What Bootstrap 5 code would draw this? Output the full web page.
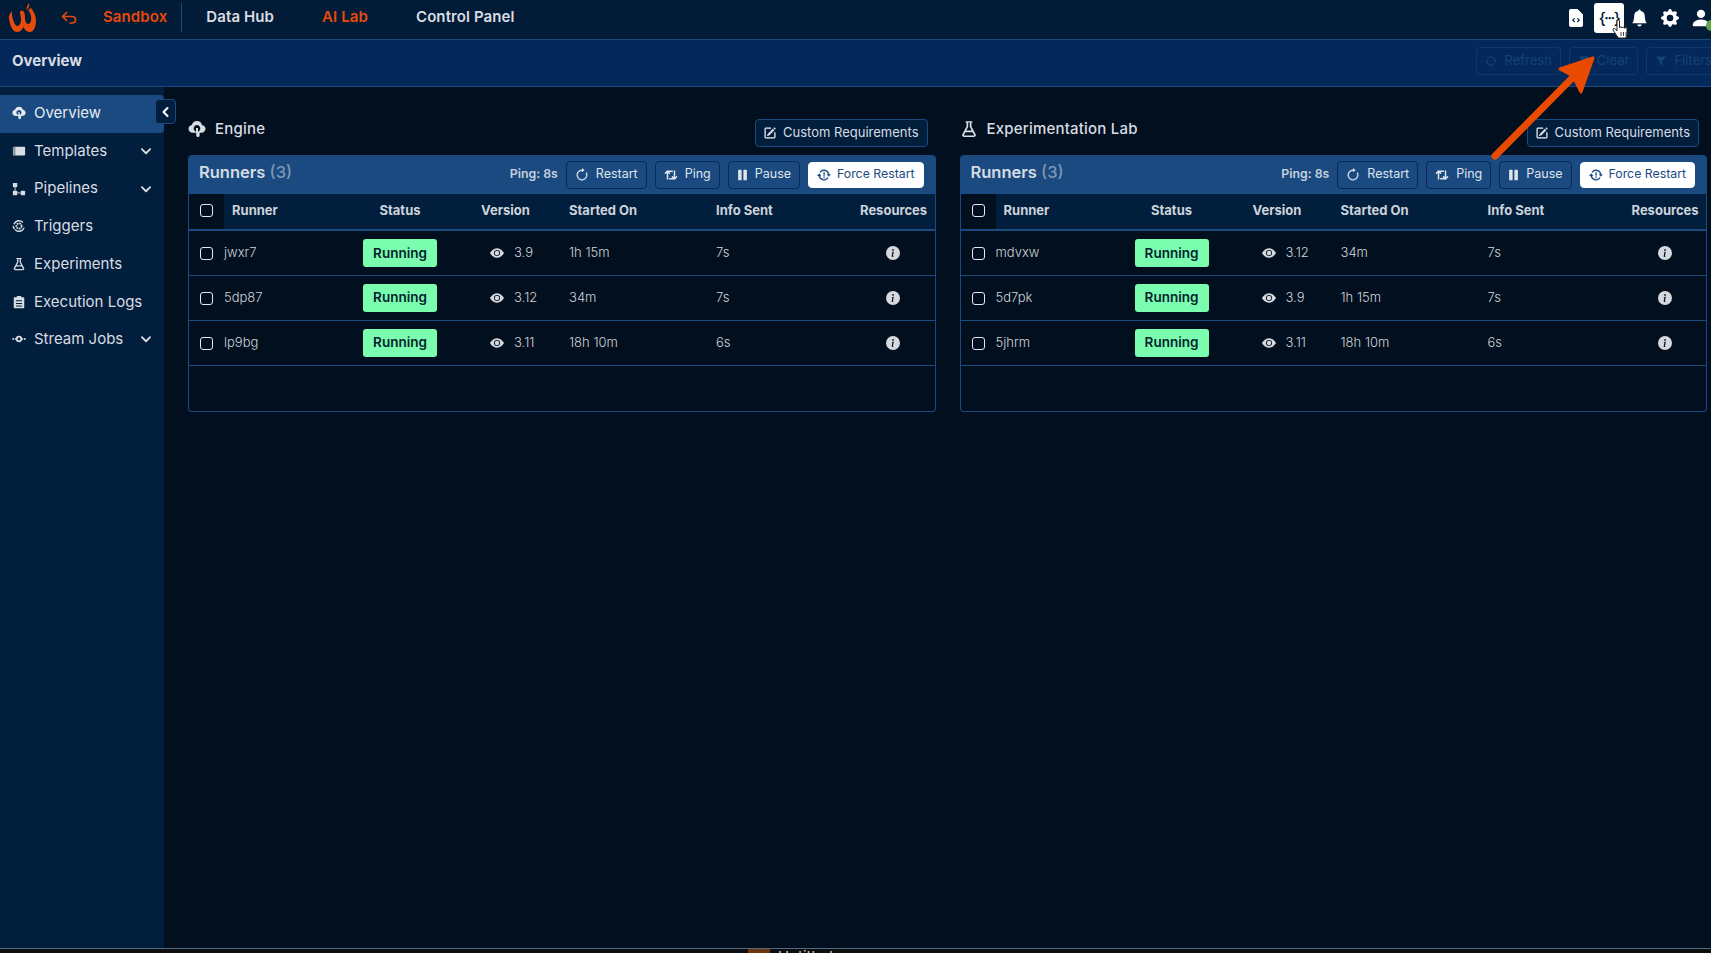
<!doctype html>
<html lang="en">
<head>
<meta charset="utf-8">
<title>Overview</title>
<link href="https://cdn.jsdelivr.net/npm/bootstrap@5.3.0/dist/css/bootstrap.min.css" rel="stylesheet">
<style>
:root{--ink:#021e3d;--deep:#020f1e;--blue:#1a4a80;--orange:#e84a0c;--txt:#d9dde2}
html,body{height:100%}
body{background:var(--deep);color:var(--txt);font-family:Inter,"Noto Sans",sans-serif;font-size:13px;overflow:hidden;height:953px}
.ic{width:14px;height:14px;fill:currentColor;flex:none}
.st{fill:none;stroke:currentColor;stroke-width:1.7;stroke-linecap:round;stroke-linejoin:round}
.topbar{height:40px;background:#021b36;border-bottom:1px solid var(--blue);padding:0 0 4px 0}
.logo{width:30px;height:32px;margin-left:8px;flex:none}
.backarrow{width:16px;height:16px;color:var(--orange);margin-left:23px;flex:none}
.toplink{font-size:15px;font-weight:600;letter-spacing:.1px;color:var(--txt);text-decoration:none;white-space:nowrap}
.toplink.hot{color:var(--orange)}
.gap-sandbox{margin-left:26px}
.gap-hub{margin-left:48px}
.vsep{width:1px;height:29px;background:var(--blue);margin:0 24px 0 14px}
.topicons{margin-left:auto;gap:0;padding-right:0}
.topicons .ic{color:#fff}
.filei{height:18px}
.codebox{width:30px;height:30px;background:#fff;border-radius:3px;color:#021b36;font-size:16px;font-weight:500;letter-spacing:-1.6px;margin:0 7px 0 11px}
.belli{width:17px;height:18px}
.geari{width:18px;height:18px;margin-left:13px}
.useri{width:22px;height:24px;margin-left:-2px}
.userwrap{width:19px;height:24px;margin-left:13px;margin-right:0;position:relative}
.okdot{position:absolute;right:-6px;bottom:-1px;width:11px;height:11px;border-radius:50%;background:#5aa84a}
.subbar{height:47px;background:#04285a;border-bottom:1px solid var(--blue);padding:0 0 4px 12px;overflow:visible}
.subtitle{font-size:15px;font-weight:700;color:var(--txt)}
.dimbtn,.dimbtn:disabled{--bs-btn-padding-y:0;--bs-btn-padding-x:8px;height:28px;font-size:13px;color:#134476;border:1px solid #0c3a70;border-radius:4px;background:transparent;display:flex;align-items:center;gap:7px;white-space:nowrap;opacity:1}
.dimbtn .ic{width:12px;height:12px}
.dimset{gap:8px;margin-right:-10px}
.shell{height:861px}
.sidebar{width:164px;flex:none;background:var(--ink);padding-top:8px;position:relative}
.sideitem{height:37.7px;display:flex;align-items:center;padding:0 12px 1px;color:var(--txt);font-size:15px;font-weight:400;gap:8px;border-radius:0 4px 4px 0;white-space:nowrap}
.sideitem:hover{color:var(--txt)}
.sideitem.on{background:var(--blue);color:#e6ebf0}
.sideitem .chev{margin-left:auto;width:12px;height:12px}
.collapser{position:absolute;left:155px;top:12px;width:21px;height:25px;background:var(--ink);border:1px solid var(--blue);border-radius:4px;color:#fff;padding:0;display:flex;align-items:center;justify-content:center;z-index:2}
.content{flex:1;min-width:0;padding:32px 4px 0 24px;display:grid;grid-template-columns:1fr 1fr;gap:24px;align-items:start}
.panelhead{height:36px}
.panelname{font-size:15px;font-weight:500;letter-spacing:.2px;line-height:20px;gap:9px;color:var(--txt)}
.panelname .ic{width:18px;height:18px}
.darkbtn{--bs-btn-padding-y:0;--bs-btn-padding-x:8px;height:28px;background:var(--ink);border:1px solid var(--blue);border-radius:4px;color:var(--txt);font-size:13px;font-weight:400;display:flex;align-items:center;gap:7px;margin-right:8px}
.darkbtn .ic{width:12px;height:12px}
.darkbtn:hover{color:var(--txt);background:var(--ink);border-color:var(--blue)}
.runbox{border:1px solid var(--blue);border-top:0;border-radius:4px;height:257px;overflow:hidden}
.runhead{height:39px;background:var(--blue);padding:0 12px 0 11px;margin:0 -1px;border-radius:4px 4px 0 0}
.runtitle{font-size:16.5px;font-weight:600;color:#d5dce4;margin-bottom:4px}
.runtitle span{color:#7f97b5;font-weight:500}
.pingtxt{font-size:12.3px;font-weight:600;color:#c6d1dd;margin-right:8px;white-space:nowrap}
.actbtn{--bs-btn-padding-y:0;--bs-btn-padding-x:8px;height:28px;background:transparent;border:1px solid #062a55;border-radius:4px;color:#dfe5ec;font-size:12.5px;display:flex;align-items:center;gap:7px;white-space:nowrap;margin-right:8px}
.actbtn:hover{color:#dfe5ec;border-color:#062a55}
.actbtn.solid{background:#fff;color:var(--blue);border-color:#fff;height:26px;margin-right:0;gap:6px;font-size:12.3px}
.actbtn.solid:hover{background:#fff;color:var(--blue);border-color:#fff}
.pausei{width:11px}
.runtable{--bs-table-bg:transparent;--bs-table-color:var(--txt);table-layout:fixed;margin:0;font-size:13px;width:100%}
.runtable th{height:36px;background:var(--ink);font-size:13px;font-weight:700;padding:0 8px 2px;vertical-align:middle;color:#ccd3da;border-bottom:2px solid var(--blue)}
.runtable th.boxcell{background:var(--deep)}
.runtable td{height:45px;padding:0 8px;vertical-align:middle;font-weight:300;border-bottom:1px solid var(--blue);color:#cfd4d9;box-shadow:none}
.runtable td.namecell{padding-left:0}
.boxcell{width:35px;padding:0 0 0 11px!important}
.w-name{width:103px}.w-stat{width:146px}.w-ver{width:88px}.w-start{width:147px}.w-info{width:144px}
.runtable .form-check-input{width:13px;height:13px;margin:4px 0 0 0;background-color:transparent;border:1px solid #e6e9ec;border-radius:3px;vertical-align:top}
.runtable th .form-check-input{margin-top:2px}
.pill{background:#7bfdb0;color:#04222e;font-size:13.5px;font-weight:600;width:74px;height:28px;border-radius:3px;display:inline-flex;align-items:center;justify-content:center}
.vereye{margin-left:9px;gap:10px}
.vereye .ic{width:14px;height:14px;color:#d5d9de}
.infoi{width:14px;height:14px;color:#d5d9de;fill:currentColor}
.footstrip{height:5px;background:#0c0e10;border-top:1px solid #55677a;overflow:hidden}
.footchip{width:22px;height:6px;background:#6b3510;margin-left:748px;flex:none}
.foottext{font-size:15px;line-height:15px;color:#c9c9c9;margin-left:8px;white-space:nowrap}
.overlay{position:absolute;left:0;top:0;width:1711px;height:953px;pointer-events:none;z-index:10}
</style>
</head>
<body>
<svg width="0" height="0" class="position-absolute">
<defs>
<symbol id="i-eye" viewBox="0 0 16 16"><path d="M10.5 8a2.5 2.5 0 1 1-5 0 2.5 2.5 0 0 1 5 0z"/><path d="M0 8s3-5.5 8-5.5S16 8 16 8s-3 5.5-8 5.5S0 8 0 8zm8 3.5a3.5 3.5 0 1 0 0-7 3.5 3.5 0 0 0 0 7z"/></symbol>
<symbol id="i-info" viewBox="0 0 16 16"><path d="M8 16A8 8 0 1 0 8 0a8 8 0 0 0 0 16zm.93-9.412-1 4.705c-.07.34.029.533.304.533.194 0 .487-.07.686-.246l-.088.416c-.287.346-.92.598-1.465.598-.703 0-1.002-.422-.808-1.319l.738-3.468c.064-.293.006-.399-.287-.47l-.451-.081.082-.381 2.29-.287zM8 5.5a1 1 0 1 1 0-2 1 1 0 0 1 0 2z"/></symbol>
<symbol id="i-bell" viewBox="0 0 16 16"><path d="M8 16a2 2 0 0 0 2-2H6a2 2 0 0 0 2 2zm.995-14.901a1 1 0 1 0-1.99 0A5.002 5.002 0 0 0 3 6c0 1.098-.5 6-2 7h14c-1.5-1-2-5.902-2-7 0-2.42-1.72-4.44-4.005-4.901z"/></symbol>
<symbol id="i-gear" viewBox="0 0 16 16"><path d="M9.405 1.05c-.413-1.4-2.397-1.4-2.81 0l-.1.34a1.464 1.464 0 0 1-2.105.872l-.31-.17c-1.283-.698-2.686.705-1.987 1.987l.169.311c.446.82.023 1.841-.872 2.105l-.34.1c-1.4.413-1.4 2.397 0 2.81l.34.1a1.464 1.464 0 0 1 .872 2.105l-.17.31c-.698 1.283.705 2.686 1.987 1.987l.311-.169a1.464 1.464 0 0 1 2.105.872l.1.34c.413 1.4 2.397 1.4 2.81 0l.1-.34a1.464 1.464 0 0 1 2.105-.872l.31.17c1.283.698 2.686-.705 1.987-1.987l-.169-.311a1.464 1.464 0 0 1 .872-2.105l.34-.1c1.4-.413 1.4-2.397 0-2.81l-.34-.1a1.464 1.464 0 0 1-.872-2.105l.17-.31c.698-1.283-.705-2.686-1.987-1.987l-.311.169a1.464 1.464 0 0 1-2.105-.872l-.1-.34zM8 10.93a2.929 2.929 0 1 1 0-5.86 2.929 2.929 0 0 1 0 5.858z"/></symbol>
<symbol id="i-user" viewBox="0 0 16 16"><path d="M3 14s-1 0-1-1 1-4 6-4 6 3 6 4-1 1-1 1H3zm5-6a3 3 0 1 0 0-6 3 3 0 0 0 0 6z"/></symbol>
<symbol id="i-edit" viewBox="0 0 16 16"><path d="M15.502 1.94a.5.5 0 0 1 0 .706L14.459 3.69l-2-2L13.502.646a.5.5 0 0 1 .707 0l1.293 1.293zm-1.75 2.456-2-2L4.939 9.21a.5.5 0 0 0-.121.196l-.805 2.414a.25.25 0 0 0 .316.316l2.414-.805a.5.5 0 0 0 .196-.12l6.813-6.814z"/><path d="M1 13.5A1.5 1.5 0 0 0 2.5 15h11a1.5 1.5 0 0 0 1.5-1.5v-6a.5.5 0 0 0-1 0v6a.5.5 0 0 1-.5.5h-11a.5.5 0 0 1-.5-.5v-11a.5.5 0 0 1 .5-.5H9a.5.5 0 0 0 0-1H2.5A1.5 1.5 0 0 0 1 2.5v11z" stroke="currentColor" stroke-width=".8"/></symbol>
<symbol id="i-restart" viewBox="0 0 16 16"><path d="M8 3a5 5 0 1 0 4.546 2.914.5.5 0 0 1 .908-.417A6 6 0 1 1 8 2v1z" stroke="currentColor" stroke-width=".5"/><path d="M8 4.466V.534a.25.25 0 0 1 .41-.192l2.36 1.966c.12.1.12.284 0 .384L8.41 4.658A.25.25 0 0 1 8 4.466z"/></symbol>
<symbol id="i-ping" viewBox="0 0 16 16"><path class="st" d="M4 12.5V3.6h5.5M1.6 6 4 3.4 6.4 6M12 3.5v8.9H6.5M9.6 10l2.4 2.6 2.4-2.6"/></symbol>
<symbol id="i-pause" viewBox="0 0 11 16"><rect x="0.5" y="2" width="4" height="12" rx="1"/><rect x="6.5" y="2" width="4" height="12" rx="1"/></symbol>
<symbol id="i-sync" viewBox="0 0 16 16"><path d="M11.534 7h3.932a.25.25 0 0 1 .192.41l-1.966 2.36a.25.25 0 0 1-.384 0l-1.966-2.36a.25.25 0 0 1 .192-.41zm-11 2h3.932a.25.25 0 0 0 .192-.41L2.692 6.23a.25.25 0 0 0-.384 0L.342 8.59A.25.25 0 0 0 .534 9z"/><path d="M8 3c-1.552 0-2.94.707-3.857 1.818a.5.5 0 1 1-.771-.636A6.002 6.002 0 0 1 13.917 7H12.9A5.002 5.002 0 0 0 8 3zM3.1 9a5.002 5.002 0 0 0 8.757 2.182.5.5 0 1 1 .771.636A6.002 6.002 0 0 1 2.083 9H3.1z" stroke="currentColor" stroke-width=".7"/></symbol>
<symbol id="i-forcesync" viewBox="0 0 16 16"><path d="M11.534 7h3.932a.25.25 0 0 1 .192.41l-1.966 2.36a.25.25 0 0 1-.384 0l-1.966-2.36a.25.25 0 0 1 .192-.41zm-11 2h3.932a.25.25 0 0 0 .192-.41L2.692 6.23a.25.25 0 0 0-.384 0L.342 8.59A.25.25 0 0 0 .534 9z"/><path d="M8 3c-1.552 0-2.94.707-3.857 1.818a.5.5 0 1 1-.771-.636A6.002 6.002 0 0 1 13.917 7H12.9A5.002 5.002 0 0 0 8 3zM3.1 9a5.002 5.002 0 0 0 8.757 2.182.5.5 0 1 1 .771.636A6.002 6.002 0 0 1 2.083 9H3.1z" stroke="currentColor" stroke-width=".7"/><rect x="7.3" y="5" width="1.6" height="3.8"/><rect x="7.3" y="9.6" width="1.6" height="1.5"/></symbol>
<symbol id="i-filter" viewBox="0 0 16 16"><path d="M1 2h14l-5.3 6.4V14l-3.4-1.8V8.4z"/></symbol>
<symbol id="i-engine" viewBox="0 0 18 18"><path fill-rule="evenodd" d="M9 1c2.5 0 4.4 1.6 4.9 3.9 2 .2 3.6 1.8 3.6 3.9 0 2.2-1.8 4-4 4h-1.9v2.4c0 .9-.7 1.8-1.6 1.8s-1.8-.9-1.8-1.8v-2.4H4.6c-2.3 0-4.1-1.8-4.1-4 0-2 1.4-3.6 3.4-3.9C4.5 2.6 6.5 1 9 1zM9 5a3.4 3.4 0 0 0-2.3 5.9c.6.5 1 .6 1.3.6V8h2v3.5c.4-.1.8-.3 1.2-.6A3.4 3.4 0 0 0 9 5z"/></symbol>
<symbol id="i-flask" viewBox="0 0 16 16"><path fill-rule="evenodd" d="M5 1h6v1.3h-.8v3.4l3.7 7c.6 1.1-.1 2.3-1.4 2.3H3.5c-1.3 0-2-1.2-1.4-2.3l3.7-7V2.3H5zm2.3 1.3v3.8L5.6 9.3h4.8L8.7 6.1V2.3zM4.8 10.8l-1.3 2.5c-.1.2 0 .4.2.4h8.6c.2 0 .3-.2.2-.4l-1.3-2.5z"/></symbol>
<symbol id="i-tpl" viewBox="0 0 16 16"><rect x="1" y="3" width="14" height="10" rx="1"/><rect x="1" y="3" width="3" height="10" fill="#021e3d" opacity=".35"/></symbol>
<symbol id="i-pipe" viewBox="0 0 16 16"><rect x="1" y="1" width="5" height="5" rx=".8"/><rect x="1" y="10" width="5" height="5" rx=".8"/><rect x="10" y="10" width="5" height="5" rx=".8"/><rect x="3" y="6" width="1" height="4"/><rect x="6" y="12" width="4" height="1"/></symbol>
<symbol id="i-trig" viewBox="0 0 16 16"><circle cx="8" cy="8" r="3" fill="none" stroke="currentColor" stroke-width="2" stroke-dasharray="2 .8"/><path class="st" stroke-width="1" d="M2.5 5.5A6 6 0 0 1 12 3.5M13.5 10.5A6 6 0 0 1 4 12.5M1.5 8.5A6.5 6.5 0 0 0 2.5 11"/></symbol>
<symbol id="i-log" viewBox="0 0 16 16"><path fill-rule="evenodd" d="M5.5 1h5v1.5H13c.6 0 1 .4 1 1V14c0 .6-.4 1-1 1H3c-.6 0-1-.4-1-1V3.5c0-.6.4-1 1-1h2.5zM4.500 6v1.200h7V6zm0 3v1.200h7V9zm0 3v1.200h7V12z"/></symbol>
<symbol id="i-stream" viewBox="0 0 16 16"><circle cx="8" cy="8" r="2.6" fill="none" stroke="currentColor" stroke-width="2"/><rect x="0.5" y="7" width="2" height="2"/><rect x="3.5" y="7" width="1.5" height="2"/><rect x="13.5" y="7" width="2" height="2"/><rect x="11" y="7" width="1.5" height="2"/></symbol>
<symbol id="i-chev" viewBox="0 0 16 16"><path fill="none" stroke="currentColor" stroke-width="2.4" stroke-linecap="round" stroke-linejoin="round" d="M2.5 5.5 8 11l5.5-5.500"/></symbol>
</defs>
</svg>

<nav class="navbar topbar flex-nowrap justify-content-start align-items-center">
  <svg class="logo" viewBox="0 0 30 32" aria-hidden="true"><path fill="#e84a0c" d="M21 1c1 3-1 5-1.5 8 1.5-1 2.500-2 3-3.500 3.500 4 5.500 8.500 5.500 13.500 0 6-2.500 11-6 11-3.500 0-5.500-2.500-6.500-5-1.500 3-3.500 5-6.500 5C5 30 2.500 25 1 17c-.5-3 .5-5.500 3-7.500-.3 3 .3 6 1.500 9.500 1 3 2.500 5 4 5 2 0 3.500-3 3.500-6.500 0-3-1-5-1-7 0-1.500 1.500-2.500 3-1.500 1.500 1 2 3.500 2 6.500 0 3.500 1 6.500 3.200 6.500 2 0 3-2.800 3-6 0-4-2-7-3.700-9.500C17.500 9 18.500 4.500 21 1z"/></svg>
  <svg class="backarrow" viewBox="0 0 16 16" aria-hidden="true"><path fill="none" stroke="currentColor" stroke-width="1.7" stroke-linecap="round" stroke-linejoin="round" d="M5.500 2.500 1.500 6.500l4 4M1.800 6.500H11c2.200 0 3.500 1.500 3.500 3.300S13.200 13 11 13H9"/></svg>
  <a class="toplink hot gap-sandbox" href="#">Sandbox</a>
  <span class="vsep"></span>
  <a class="toplink" href="#">Data Hub</a>
  <a class="toplink hot gap-hub" href="#">AI Lab</a>
  <a class="toplink gap-hub" href="#">Control Panel</a>
  <div class="topicons d-flex align-items-center">
    <svg class="ic filei" viewBox="0 0 14 18" aria-hidden="true"><path fill-rule="evenodd" d="M2 0h6.500L14 5.500V16a2 2 0 0 1-2 2H2a2 2 0 0 1-2-2V2a2 2 0 0 1 2-2zM5.300 9 3 11.200l2.300 2.300.8-.8-1.500-1.500 1.500-1.400zm3.400 0-.8.800 1.500 1.400-1.500 1.500.8.800 2.300-2.300z"/></svg>
    <span class="codebox d-flex align-items-center justify-content-center">{···}</span>
    <svg class="ic belli"><use href="#i-bell"/></svg>
    <svg class="ic geari"><use href="#i-gear"/></svg>
    <span class="userwrap d-inline-block"><svg class="ic useri"><use href="#i-user"/></svg><span class="okdot"></span></span>
  </div>
</nav>

<div class="subbar d-flex align-items-center">
  <span class="subtitle">Overview</span>
  <div class="dimset d-flex ms-auto">
    <button class="btn dimbtn" type="button" disabled><svg class="ic"><use href="#i-sync"/></svg>Refresh</button>
    <button class="btn dimbtn" type="button" disabled><svg class="ic"><use href="#i-filter"/></svg>Clear</button>
    <button class="btn dimbtn" type="button" disabled><svg class="ic"><use href="#i-filter"/></svg>Filters</button>
  </div>
</div>

<div class="shell d-flex">
  <aside class="sidebar">
    <button class="collapser" type="button" aria-label="Collapse"><svg width="9" height="12" viewBox="0 0 9 12"><path fill="none" stroke="currentColor" stroke-width="2" stroke-linecap="round" stroke-linejoin="round" d="M6.500 2 2.500 6l4 4"/></svg></button>
    <nav class="nav flex-column">
      <a class="nav-link sideitem on" href="#"><svg class="ic"><use href="#i-engine"/></svg>Overview</a>
      <a class="nav-link sideitem" href="#"><svg class="ic"><use href="#i-tpl"/></svg>Templates<svg class="ic chev"><use href="#i-chev"/></svg></a>
      <a class="nav-link sideitem" href="#"><svg class="ic"><use href="#i-pipe"/></svg>Pipelines<svg class="ic chev"><use href="#i-chev"/></svg></a>
      <a class="nav-link sideitem" href="#"><svg class="ic"><use href="#i-trig"/></svg>Triggers</a>
      <a class="nav-link sideitem" href="#"><svg class="ic"><use href="#i-flask"/></svg>Experiments</a>
      <a class="nav-link sideitem" href="#"><svg class="ic"><use href="#i-log"/></svg>Execution Logs</a>
      <a class="nav-link sideitem" href="#"><svg class="ic"><use href="#i-stream"/></svg>Stream Jobs<svg class="ic chev"><use href="#i-chev"/></svg></a>
    </nav>
  </aside>

  <main class="content">
    <section>
      <div class="panelhead d-flex justify-content-between align-items-start">
        <div class="panelname d-flex align-items-center"><svg class="ic"><use href="#i-engine"/></svg>Engine</div>
        <button class="btn darkbtn" type="button"><svg class="ic"><use href="#i-edit"/></svg>Custom Requirements</button>
      </div>
      <div class="runbox">
        <div class="runhead d-flex align-items-center">
          <div class="runtitle me-auto">Runners <span>(3)</span></div>
          <span class="pingtxt">Ping: 8s</span>
          <button class="btn actbtn" type="button"><svg class="ic"><use href="#i-restart"/></svg>Restart</button>
          <button class="btn actbtn" type="button"><svg class="ic"><use href="#i-ping"/></svg>Ping</button>
          <button class="btn actbtn" type="button"><svg class="ic pausei"><use href="#i-pause"/></svg>Pause</button>
          <button class="btn actbtn solid" type="button"><svg class="ic"><use href="#i-forcesync"/></svg>Force Restart</button>
        </div>
        <table class="table runtable">
          <thead><tr><th class="boxcell"><input class="form-check-input" type="checkbox" aria-label="All"></th><th class="w-name">Runner</th><th class="w-stat text-center">Status</th><th class="w-ver">Version</th><th class="w-start">Started On</th><th class="w-info">Info Sent</th><th class="text-center">Resources</th></tr></thead>
          <tbody>
            <tr><td class="boxcell"><input class="form-check-input" type="checkbox" aria-label="jwxr7"></td><td class="namecell">jwxr7</td><td class="text-center"><span class="pill">Running</span></td><td><div class="vereye d-flex align-items-center"><svg class="ic"><use href="#i-eye"/></svg>3.9</div></td><td>1h 15m</td><td>7s</td><td class="text-center"><svg class="infoi"><use href="#i-info"/></svg></td></tr>
            <tr><td class="boxcell"><input class="form-check-input" type="checkbox" aria-label="5dp87"></td><td class="namecell">5dp87</td><td class="text-center"><span class="pill">Running</span></td><td><div class="vereye d-flex align-items-center"><svg class="ic"><use href="#i-eye"/></svg>3.12</div></td><td>34m</td><td>7s</td><td class="text-center"><svg class="infoi"><use href="#i-info"/></svg></td></tr>
            <tr><td class="boxcell"><input class="form-check-input" type="checkbox" aria-label="lp9bg"></td><td class="namecell">lp9bg</td><td class="text-center"><span class="pill">Running</span></td><td><div class="vereye d-flex align-items-center"><svg class="ic"><use href="#i-eye"/></svg>3.11</div></td><td>18h 10m</td><td>6s</td><td class="text-center"><svg class="infoi"><use href="#i-info"/></svg></td></tr>
          </tbody>
        </table>
      </div>
    </section>
    <section>
      <div class="panelhead d-flex justify-content-between align-items-start">
        <div class="panelname d-flex align-items-center"><svg class="ic"><use href="#i-flask"/></svg>Experimentation Lab</div>
        <button class="btn darkbtn" type="button"><svg class="ic"><use href="#i-edit"/></svg>Custom Requirements</button>
      </div>
      <div class="runbox">
        <div class="runhead d-flex align-items-center">
          <div class="runtitle me-auto">Runners <span>(3)</span></div>
          <span class="pingtxt">Ping: 8s</span>
          <button class="btn actbtn" type="button"><svg class="ic"><use href="#i-restart"/></svg>Restart</button>
          <button class="btn actbtn" type="button"><svg class="ic"><use href="#i-ping"/></svg>Ping</button>
          <button class="btn actbtn" type="button"><svg class="ic pausei"><use href="#i-pause"/></svg>Pause</button>
          <button class="btn actbtn solid" type="button"><svg class="ic"><use href="#i-forcesync"/></svg>Force Restart</button>
        </div>
        <table class="table runtable">
          <thead><tr><th class="boxcell"><input class="form-check-input" type="checkbox" aria-label="All"></th><th class="w-name">Runner</th><th class="w-stat text-center">Status</th><th class="w-ver">Version</th><th class="w-start">Started On</th><th class="w-info">Info Sent</th><th class="text-center">Resources</th></tr></thead>
          <tbody>
            <tr><td class="boxcell"><input class="form-check-input" type="checkbox" aria-label="mdvxw"></td><td class="namecell">mdvxw</td><td class="text-center"><span class="pill">Running</span></td><td><div class="vereye d-flex align-items-center"><svg class="ic"><use href="#i-eye"/></svg>3.12</div></td><td>34m</td><td>7s</td><td class="text-center"><svg class="infoi"><use href="#i-info"/></svg></td></tr>
            <tr><td class="boxcell"><input class="form-check-input" type="checkbox" aria-label="5d7pk"></td><td class="namecell">5d7pk</td><td class="text-center"><span class="pill">Running</span></td><td><div class="vereye d-flex align-items-center"><svg class="ic"><use href="#i-eye"/></svg>3.9</div></td><td>1h 15m</td><td>7s</td><td class="text-center"><svg class="infoi"><use href="#i-info"/></svg></td></tr>
            <tr><td class="boxcell"><input class="form-check-input" type="checkbox" aria-label="5jhrm"></td><td class="namecell">5jhrm</td><td class="text-center"><span class="pill">Running</span></td><td><div class="vereye d-flex align-items-center"><svg class="ic"><use href="#i-eye"/></svg>3.11</div></td><td>18h 10m</td><td>6s</td><td class="text-center"><svg class="infoi"><use href="#i-info"/></svg></td></tr>
          </tbody>
        </table>
      </div>
    </section>
  </main>
</div>

<footer class="footstrip d-flex">
  <span class="footchip"></span><span class="foottext">Untitled</span>
</footer>

<svg class="overlay" viewBox="0 0 1711 953" aria-hidden="true">
  <line x1="1495" y1="156" x2="1588" y2="62" stroke="#e84a00" stroke-width="7" stroke-linecap="round"/>
  <path d="M1593 58 1560 69 1573 76 1581 92z" fill="#e84a00" stroke="#e84a00" stroke-width="3" stroke-linejoin="round"/>
  <path d="M1617 21c0-1.500 2.500-1.500 2.500 0v7c.5-1.500 2.500-1.500 2.500 0 .5-1.200 2.500-1.200 2.500.3.500-1 2.500-1 2.500.5v5.200c0 1.500-1 2.500-1 4h-7.500c-1-1.500-2.500-3-3.500-5l-2-3c-.6-1.300 1.200-2.300 2.300-1.200l1.700 2z" fill="#fff" stroke="#222" stroke-width="1"/>
  <path d="M1621 32v4M1623.500 32v4M1626 32v4" stroke="#444" stroke-width="1"/>
</svg>
<script src="https://cdn.jsdelivr.net/npm/bootstrap@5.3.0/dist/js/bootstrap.bundle.min.js"></script>
</body>
</html>
